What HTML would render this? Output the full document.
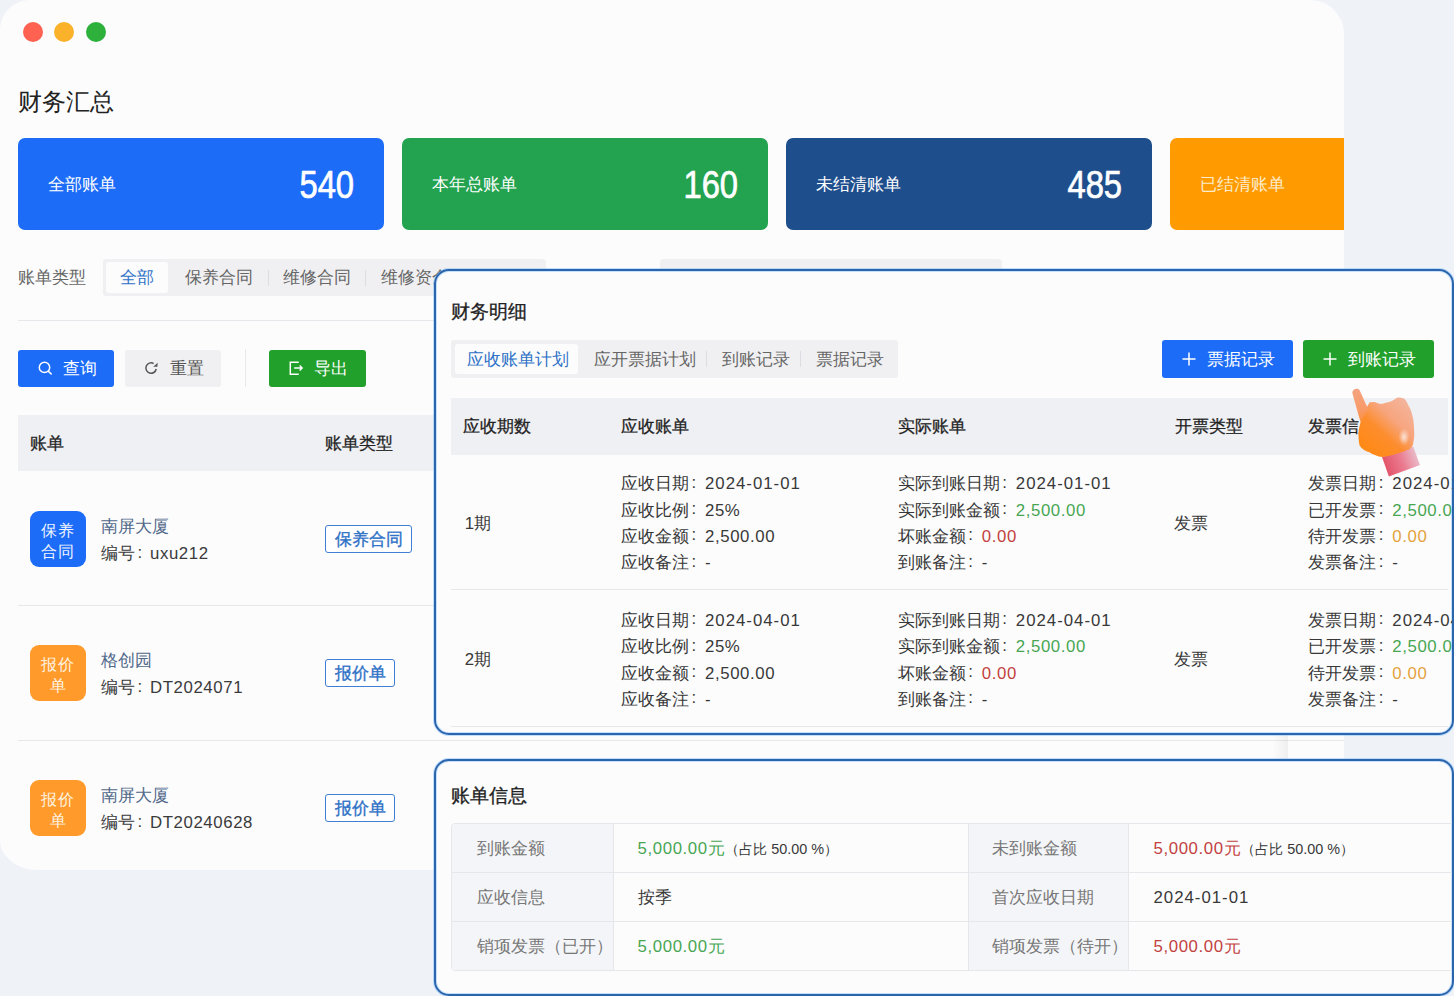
<!DOCTYPE html>
<html><head><meta charset="utf-8"><style>
*{box-sizing:border-box;margin:0;padding:0}
html,body{width:1454px;height:996px;overflow:hidden}
body{background:#eff3f8;font-family:"Liberation Sans",sans-serif;color:#383838;position:relative}
.a{position:absolute;white-space:nowrap}
i.c{font-style:normal;display:inline-block;width:16px;padding-left:2.5px;position:relative;top:-1.5px}
.win{position:absolute;left:0;top:0;width:1344px;height:870px;background:#fcfcfd;border-radius:30px 34px 0 38px / 30px 34px 0 30px;overflow:hidden}
.dot{position:absolute;top:22px;width:20px;height:20px;border-radius:50%}
.card{position:absolute;top:138px;width:366px;height:92px;border-radius:7px;color:#fff}
.card .lb{position:absolute;left:30px;top:37px;font-size:16.8px;line-height:20px}
.card .num{position:absolute;right:30px;top:28px;font-size:39px;line-height:38px;-webkit-text-stroke:.7px #fff;letter-spacing:0px;transform:scaleX(.84);transform-origin:right center}
.t16{font-size:16.8px;line-height:20px}
.btn{position:absolute;top:350px;height:37px;border-radius:3px;font-size:16.8px}
.hdr{position:absolute;background:#eff0f3}
.sep{position:absolute;height:1px;background:#e7e8ec}
.ico{position:absolute;left:30px;width:56px;height:56px;border-radius:9px;color:#fff;font-size:16.4px;line-height:21.5px;text-align:center;padding-top:8.5px;letter-spacing:1px}
.tag{position:absolute;left:325px;height:28px;border:1.3px solid #3f7fd6;border-radius:3px;background:#fff;color:#2f72c6;font-size:16.8px;line-height:27px;text-align:center;-webkit-text-stroke:.35px #2f72c6}
.panel{position:absolute;left:434px;width:1020px;border:2px solid #2b66ad;border-radius:15px;background:#fcfcfd;overflow:hidden;box-shadow:0 0 0 1px rgba(120,185,250,.45),inset 0 0 0 1px rgba(120,185,250,.4)}
.g{color:#48a653}.r{color:#c2413e}.o{color:#e3a23c}
.n{letter-spacing:.6px}.d{letter-spacing:1px}
.sm{font-size:14.4px}
</style></head><body>

<div class="win">
  <div class="dot" style="left:23px;background:#ff6250"></div>
  <div class="dot" style="left:54px;background:#fbb22b"></div>
  <div class="dot" style="left:86px;background:#2db13c"></div>
  <div class="a" style="left:18px;top:88px;font-size:24px;line-height:28px;color:#222">财务汇总</div>

  <div class="card" style="left:18px;background:#1c6cf8"><div class="lb a">全部账单</div><div class="num a">540</div></div>
  <div class="card" style="left:402px;background:#23a24f"><div class="lb a">本年总账单</div><div class="num a">160</div></div>
  <div class="card" style="left:786px;background:#1f4e8d"><div class="lb a">未结清账单</div><div class="num a">485</div></div>
  <div class="card" style="left:1170px;background:#ff9a00"><div class="lb a" style="color:#fdeccb">已结清账单</div></div>

  <div class="a t16" style="left:18px;top:268px;color:#666">账单类型</div>
  <div class="a" style="left:103px;top:259px;width:443px;height:37px;background:#f0f0f2;border-radius:3px"></div>
  <div class="a" style="left:106px;top:262px;width:62px;height:31px;background:#fcfcfd;border-radius:3px"></div>
  <div class="a t16" style="left:120px;top:268px;color:#2f72c6">全部</div>
  <div class="a t16" style="left:185px;top:268px;color:#666">保养合同</div>
  <div class="a" style="left:268px;top:270px;width:1px;height:16px;background:#dcdde2"></div>
  <div class="a t16" style="left:283px;top:268px;color:#666">维修合同</div>
  <div class="a" style="left:365px;top:270px;width:1px;height:16px;background:#dcdde2"></div>
  <div class="a t16" style="left:381px;top:268px;color:#666">维修资金合同</div>
  <div class="a" style="left:660px;top:259px;width:342px;height:37px;background:#f0f0f2;border-radius:3px"></div>
  <div class="sep" style="left:18px;top:320px;width:1300px"></div>

  <div class="btn a" style="left:18px;width:96px;background:#1c6cf8;color:#fff">
    <svg class="a" style="left:19px;top:11px" width="16" height="16" viewBox="0 0 16 16"><circle cx="7.5" cy="6.4" r="5.2" fill="none" stroke="#fff" stroke-width="1.5"/><path d="M11.4 10.4L14.2 12.9" stroke="#fff" stroke-width="1.5" stroke-linecap="round"/></svg>
    <div class="a t16" style="left:45px;top:9px">查询</div></div>
  <div class="btn a" style="left:125px;width:96px;background:#f0f0f2;color:#555">
    <svg class="a" style="left:18px;top:10px" width="16" height="16" viewBox="0 0 16 16"><path d="M13.2 9.0A5.2 5.2 0 1 1 10.6 3.5" fill="none" stroke="#555" stroke-width="1.5"/><path d="M10.2 6.7L14.7 2.7L14.4 6.7Z" fill="#555"/></svg>
    <div class="a t16" style="left:45px;top:9px">重置</div></div>
  <div class="a" style="left:245px;top:349px;width:1px;height:38px;background:#e8e9ed"></div>
  <div class="btn a" style="left:269px;width:97px;background:#21a02b;color:#fff">
    <svg class="a" style="left:20px;top:11px" width="16" height="16" viewBox="0 0 16 16"><path d="M9.7 1.3H1.3V13.3H9.7" fill="none" stroke="#fff" stroke-width="1.5"/><path d="M5.2 7.05H13M10.7 4.6L13.1 7.05L10.7 9.5" fill="none" stroke="#fff" stroke-width="1.5"/></svg>
    <div class="a t16" style="left:45px;top:9px">导出</div></div>

  <div class="hdr" style="left:18px;top:415px;width:1300px;height:56px"></div>
  <div class="a t16" style="left:30px;top:434px;-webkit-text-stroke:.25px #222;color:#222">账单</div>
  <div class="a t16" style="left:325px;top:434px;-webkit-text-stroke:.25px #222;color:#222">账单类型</div>
  <div class="ico" style="top:511px;background:#1c6cf8;color:#eef4ff">保养<br>合同</div>
  <div class="a t16" style="left:101px;top:517px;color:#51698a">南屏大厦</div>
  <div class="a t16" style="left:101px;top:544px;color:#3a3a3a">编号<i class="c">:</i><span style="letter-spacing:.6px;margin-left:-1px">uxu212</span></div>
  <div class="tag" style="top:525px;width:87px">保养合同</div>
  <div class="ico" style="top:645px;background:#ff9a2b;color:#fff3e0">报价<br>单</div>
  <div class="a t16" style="left:101px;top:651px;color:#51698a">格创园</div>
  <div class="a t16" style="left:101px;top:678px;color:#3a3a3a">编号<i class="c">:</i><span style="letter-spacing:.6px;margin-left:-1px">DT2024071</span></div>
  <div class="tag" style="top:659px;width:70px">报价单</div>
  <div class="ico" style="top:780px;background:#ff9a2b;color:#fff3e0">报价<br>单</div>
  <div class="a t16" style="left:101px;top:786px;color:#51698a">南屏大厦</div>
  <div class="a t16" style="left:101px;top:813px;color:#3a3a3a">编号<i class="c">:</i><span style="letter-spacing:.6px;margin-left:-1px">DT20240628</span></div>
  <div class="tag" style="top:794px;width:70px">报价单</div>
  <div class="sep" style="left:18px;top:605px;width:1300px"></div>
  <div class="sep" style="left:18px;top:740px;width:1326px"></div>
  <div class="a" style="left:1272px;top:730px;width:16px;height:40px;background:linear-gradient(90deg,rgba(0,0,0,0),rgba(0,0,0,.05))"></div>
</div>

<div class="panel" style="top:269px;height:466px"><div class="a" style="left:1px;top:0px;width:1020px;height:467px">
  <div class="a" style="left:14px;top:29px;font-size:19.2px;line-height:24px;color:#222;-webkit-text-stroke:.3px #222">财务明细</div>
  <div class="a" style="left:14px;top:69px;width:447px;height:38px;background:#f0f0f2;border-radius:3px"></div>
  <div class="a" style="left:18px;top:73px;width:123px;height:30px;background:#fcfcfd;border-radius:3px"></div>
  <div class="a t16" style="left:30px;top:79px;color:#2f72c6">应收账单计划</div>
  <div class="a t16" style="left:157px;top:79px;color:#666">应开票据计划</div>
  <div class="a" style="left:269px;top:80px;width:1px;height:16px;background:#dcdde2"></div>
  <div class="a t16" style="left:285px;top:79px;color:#666">到账记录</div>
  <div class="a" style="left:363px;top:80px;width:1px;height:16px;background:#dcdde2"></div>
  <div class="a t16" style="left:379px;top:79px;color:#666">票据记录</div>
  <div class="a" style="left:725px;top:69px;width:131px;height:38px;background:#1c6cf8;border-radius:3px;color:#fff">
    <svg class="a" style="left:20px;top:12px" width="14" height="14" viewBox="0 0 14 14"><path d="M7 0.5V13.5M0.5 7H13.5" stroke="#fff" stroke-width="1.5"/></svg>
    <div class="a t16" style="left:45px;top:10px">票据记录</div></div>
  <div class="a" style="left:866px;top:69px;width:131px;height:38px;background:#21a02b;border-radius:3px;color:#fff">
    <svg class="a" style="left:20px;top:12px" width="14" height="14" viewBox="0 0 14 14"><path d="M7 0.5V13.5M0.5 7H13.5" stroke="#fff" stroke-width="1.5"/></svg>
    <div class="a t16" style="left:45px;top:10px">到账记录</div></div>
  <div class="hdr" style="left:14px;top:127px;width:997px;height:57px"></div>
  <div class="a t16" style="left:26px;top:146px;-webkit-text-stroke:.25px #222;color:#222">应收期数</div>
  <div class="a t16" style="left:184px;top:146px;-webkit-text-stroke:.25px #222;color:#222">应收账单</div>
  <div class="a t16" style="left:461px;top:146px;-webkit-text-stroke:.25px #222;color:#222">实际账单</div>
  <div class="a t16" style="left:738px;top:146px;-webkit-text-stroke:.25px #222;color:#222">开票类型</div>
  <div class="a t16" style="left:871px;top:146px;-webkit-text-stroke:.25px #222;color:#222">发票信息</div>
<div class="a t16" style="left:27.7px;top:243.4px">1期</div>
<div class="a t16" style="left:184.0px;top:203.2px">应收日期<i class="c">:</i><span class="d ">2024-01-01</span></div>
<div class="a t16" style="left:184.0px;top:229.5px">应收比例<i class="c">:</i><span class="n ">25%</span></div>
<div class="a t16" style="left:184.0px;top:255.8px">应收金额<i class="c">:</i><span class="n ">2,500.00</span></div>
<div class="a t16" style="left:184.0px;top:282.1px">应收备注<i class="c">:</i><span class="n ">-</span></div>
<div class="a t16" style="left:460.8px;top:203.2px">实际到账日期<i class="c">:</i><span class="d ">2024-01-01</span></div>
<div class="a t16" style="left:460.8px;top:229.5px">实际到账金额<i class="c">:</i><span class="n g">2,500.00</span></div>
<div class="a t16" style="left:460.8px;top:255.8px">坏账金额<i class="c">:</i><span class="n r">0.00</span></div>
<div class="a t16" style="left:460.8px;top:282.1px">到账备注<i class="c">:</i><span class="n ">-</span></div>
<div class="a t16" style="left:737px;top:243.4px">发票</div>
<div class="a t16" style="left:871.3px;top:203.2px">发票日期<i class="c">:</i><span class="d ">2024-01-01</span></div>
<div class="a t16" style="left:871.3px;top:229.5px">已开发票<i class="c">:</i><span class="n g">2,500.00</span></div>
<div class="a t16" style="left:871.3px;top:255.8px">待开发票<i class="c">:</i><span class="n o">0.00</span></div>
<div class="a t16" style="left:871.3px;top:282.1px">发票备注<i class="c">:</i><span class="n ">-</span></div>
<div class="a t16" style="left:27.7px;top:379.0px">2期</div>
<div class="a t16" style="left:184.0px;top:339.9px">应收日期<i class="c">:</i><span class="d ">2024-04-01</span></div>
<div class="a t16" style="left:184.0px;top:366.2px">应收比例<i class="c">:</i><span class="n ">25%</span></div>
<div class="a t16" style="left:184.0px;top:392.5px">应收金额<i class="c">:</i><span class="n ">2,500.00</span></div>
<div class="a t16" style="left:184.0px;top:418.8px">应收备注<i class="c">:</i><span class="n ">-</span></div>
<div class="a t16" style="left:460.8px;top:339.9px">实际到账日期<i class="c">:</i><span class="d ">2024-04-01</span></div>
<div class="a t16" style="left:460.8px;top:366.2px">实际到账金额<i class="c">:</i><span class="n g">2,500.00</span></div>
<div class="a t16" style="left:460.8px;top:392.5px">坏账金额<i class="c">:</i><span class="n r">0.00</span></div>
<div class="a t16" style="left:460.8px;top:418.8px">到账备注<i class="c">:</i><span class="n ">-</span></div>
<div class="a t16" style="left:737px;top:379.0px">发票</div>
<div class="a t16" style="left:871.3px;top:339.9px">发票日期<i class="c">:</i><span class="d ">2024-04-01</span></div>
<div class="a t16" style="left:871.3px;top:366.2px">已开发票<i class="c">:</i><span class="n g">2,500.00</span></div>
<div class="a t16" style="left:871.3px;top:392.5px">待开发票<i class="c">:</i><span class="n o">0.00</span></div>
<div class="a t16" style="left:871.3px;top:418.8px">发票备注<i class="c">:</i><span class="n ">-</span></div>
  <div class="sep" style="left:14px;top:318px;width:997px"></div>
  <div class="sep" style="left:14px;top:455px;width:997px"></div>
</div></div>

<div class="panel" style="top:759px;height:237px"><div class="a" style="left:1px;top:1px;width:1020px;height:240px">
  <div class="a" style="left:14px;top:22px;font-size:19.2px;line-height:24px;color:#222;-webkit-text-stroke:.3px #222">账单信息</div>
  <div class="a" style="left:14px;top:61px;width:1010px;height:148px;border:1px solid #e6e7eb;border-radius:4px;overflow:hidden">
    <div class="a" style="left:0;top:0;width:162px;height:148px;background:#f4f5f8"></div>
    <div class="a" style="left:516px;top:0;width:161px;height:148px;background:#f4f5f8;border-left:1px solid #e6e7eb;border-right:1px solid #e6e7eb"></div>
    <div class="a" style="left:161px;top:0;width:1px;height:148px;background:#e6e7eb"></div>
    <div class="a" style="left:0;top:48px;width:1010px;height:1px;background:#e6e7eb"></div>
    <div class="a" style="left:0;top:97px;width:1010px;height:1px;background:#e6e7eb"></div>
    <div class="a t16" style="left:24.5px;top:14.5px;color:#777">到账金额</div>
    <div class="a t16" style="left:185.6px;top:14.5px"><span class="n g">5,000.00元</span><span class="sm">（占比 50.00 %）</span></div>
    <div class="a t16" style="left:540.3px;top:14.5px;color:#777">未到账金额</div>
    <div class="a t16" style="left:701.5px;top:14.5px"><span class="n r">5,000.00元</span><span class="sm">（占比 50.00 %）</span></div>
    <div class="a t16" style="left:24.5px;top:63.5px;color:#777">应收信息</div>
    <div class="a t16" style="left:185.6px;top:63.5px">按季</div>
    <div class="a t16" style="left:540.3px;top:63.5px;color:#777">首次应收日期</div>
    <div class="a t16" style="left:701.5px;top:63.5px"><span class="d">2024-01-01</span></div>
    <div class="a t16" style="left:24.5px;top:112.5px;color:#777">销项发票（已开）</div>
    <div class="a t16" style="left:185.6px;top:112.5px"><span class="n g">5,000.00元</span></div>
    <div class="a t16" style="left:540.3px;top:112.5px;color:#777">销项发票（待开）</div>
    <div class="a t16" style="left:701.5px;top:112.5px"><span class="n r">5,000.00元</span></div>
  </div>
</div></div>

<svg class="a" style="left:1330px;top:380px" width="110" height="100" viewBox="1330 380 110 100">
  <defs>
    <linearGradient id="hf" x1="1368" y1="448" x2="1408" y2="405" gradientUnits="userSpaceOnUse">
      <stop offset="0" stop-color="#ff8a18"/><stop offset="0.35" stop-color="#fd8d2c"/><stop offset="0.65" stop-color="#f7a57e"/><stop offset="1" stop-color="#f4b399"/>
    </linearGradient>
    <linearGradient id="hi" x1="1356" y1="390" x2="1364" y2="424" gradientUnits="userSpaceOnUse">
      <stop offset="0" stop-color="#f5a380"/><stop offset="0.6" stop-color="#f89a66"/><stop offset="1" stop-color="#fd8c2e"/>
    </linearGradient>
    <linearGradient id="hc" x1="1386" y1="468" x2="1418" y2="456" gradientUnits="userSpaceOnUse">
      <stop offset="0" stop-color="#e3556a"/><stop offset="0.5" stop-color="#eb7b90"/><stop offset="1" stop-color="#e9bfcb"/>
    </linearGradient>
    <radialGradient id="hh" cx="0.5" cy="0.5" r="0.5">
      <stop offset="0" stop-color="#fbe2da"/><stop offset="1" stop-color="#fbe2da" stop-opacity="0"/>
    </radialGradient>
  </defs>
  <path d="M1382,457 L1413.2,446.4 L1420,464.9 L1388.9,476.6 Z" fill="url(#hc)"/>
  <path d="M1360.6,422 C1359,428 1358,433 1358.6,437.6 C1358.8,441 1359,443.5 1359.6,445.4 C1362,449 1365,451 1369.4,452.2 C1373,454.5 1378,456.5 1382,457 C1392,456 1403,452 1409.3,449.3 C1412,447 1413,445 1413.2,443.4 C1414,439 1414.5,435 1414.2,431.7 C1414,425 1413.5,419 1412.3,415.2 C1411,410 1410,407.5 1408.4,405.4 C1406.5,401 1405,399 1403.5,398.6 C1401,397.5 1399,397.2 1397.6,397.6 C1396,398.5 1395,399.2 1393.7,400 C1391,401.5 1389,402.2 1386.9,402.5 C1384.5,403 1382.5,404 1381,404 C1378,403.8 1376,402 1374.2,402 C1372,402 1370.5,402.3 1369.4,402.5 C1366,409 1363,416 1360.6,422 Z" fill="url(#hf)"/>
  <path d="M1352.3,392.7 C1352.5,388.5 1358,387.8 1359.6,390.3 C1361.5,394 1363.5,399 1365.5,403.5 C1366.5,405.5 1367.8,407 1368.9,408.3 L1360.6,422 C1359.5,418 1358.5,415 1357.7,412.2 C1356,405 1353.5,398 1352.3,392.7 Z" fill="url(#hi)"/>
  <ellipse cx="1404" cy="437" rx="5.5" ry="8.5" fill="url(#hh)"/>
</svg>
</body></html>
